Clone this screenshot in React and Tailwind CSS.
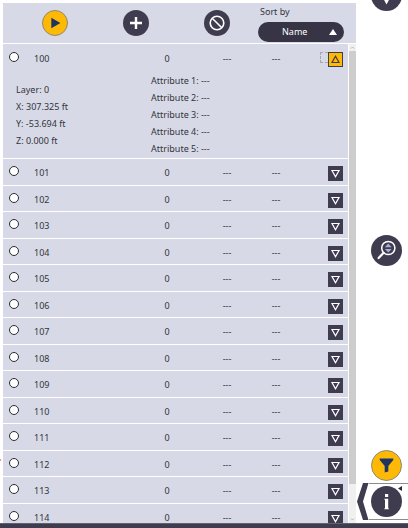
import { useState } from "react";

const points = Array.from({ length: 15 }, (_, i) => ({
  id: 100 + i,
  count: 0,
  layer: 0,
  x: "307.325 ft",
  y: "-53.694 ft",
  z: "0.000 ft",
}));

const attributes = [1, 2, 3, 4, 5];

const PlayIcon = () => (
  <svg viewBox="1 1 24 24" className="h-full w-full">
    <path d="M9.3 7.8 18.4 13 9.3 18.2Z" fill="#1f3560" />
  </svg>
);

const PlusIcon = () => (
  <svg viewBox="0 0 26 26" className="h-full w-full">
    <path d="M13 7v12M7 13h12" stroke="#fff" strokeWidth="2.4" />
  </svg>
);

const BanIcon = () => (
  <svg viewBox="0 0 26 26" className="h-full w-full" fill="none" stroke="#fff" strokeWidth="1.6">
    <circle cx="13" cy="13" r="6.8" />
    <path d="m8.2 8.2 9.6 9.6" />
  </svg>
);

const PinIcon = () => (
  <svg viewBox="0 0 31 31" className="h-full w-full">
    <path d="M12 18h7l-3.5 6.5Z" fill="#fff" />
  </svg>
);

const ZoomIcon = () => (
  <svg viewBox="0 0 31 31" className="h-full w-full">
    <circle cx="17.3" cy="13" r="6.6" fill="none" stroke="#fff" strokeWidth="1.5" />
    <path d="m12.6 17.8-5 5.2" stroke="#fff" strokeWidth="2.2" strokeLinecap="round" />
    <path d="m17.3 8.6 3.4 3.6h-6.8ZM17.3 17.6l3.4-3.6h-6.8Z" fill="#a9acd6" />
  </svg>
);

const FilterIcon = () => (
  <svg viewBox="1 1 29 29" className="h-full w-full">
    <path d="M8.7 8.5h13.6v1.6L17.3 16v5.5l-3.6 1V16L8.7 10.1Z" fill="#1f3560" />
  </svg>
);

const InfoIcon = () => (
  <svg viewBox="0 0 31 31" className="h-full w-full" fill="#fff">
    <path d="M14 8h3.2v3H14ZM13.4 12.8h3.8v9.4h.6v1h-4.4v-1h.6v-8.4h-.6Z" />
  </svg>
);

const roundTool = "block h-[26px] w-[26px] rounded-full";
const railTool = "block h-[31px] w-[31px] shrink-0 rounded-full";

const PointRow = ({ point, open, selected, onToggle, onSelect }) => (
  <>
    <tr className={open ? "h-[27px]" : "h-[26px] odd:h-[27px]"}>
      <td className={`pb-[2px] pl-[6px] ${open ? "" : "border-b border-white"}`}>
        <input
          type="radio"
          name="point"
          aria-label={`Select point ${point.id}`}
          checked={selected}
          onChange={onSelect}
          className="block h-[10px] w-[10px] appearance-none rounded-full border border-[#2b2b33] bg-white checked:bg-[#3f3c4f]"
        />
      </td>
      <td className={`pt-[2px] ${open ? "" : "border-b border-white"}`}>{point.id}</td>
      <td className={`pt-[2px] text-center ${open ? "" : "border-b border-white"}`}>{point.count}</td>
      <td className={`pt-[2px] text-center ${open ? "" : "border-b border-white"}`}>---</td>
      <td className={`pt-[2px] text-center ${open ? "" : "border-b border-white"}`}>---</td>
      <td className={`pt-[3px] pr-[5px] ${open ? "" : "border-b border-white"}`}>
        <div className="flex justify-end">
          {open && <span className="h-[11px] w-2 border border-r-0 border-dashed border-[#a5a6b0]" />}
          <button
            type="button"
            aria-label={`Details of point ${point.id}`}
            aria-expanded={open}
            onClick={onToggle}
            className={`h-[15px] w-[15px] border border-[#3f3c4f] ${open ? "bg-[#fdb906] text-[#3f3c4f]" : "bg-[#3f3c4f] text-white"}`}
          >
            <svg viewBox="0 0 13 13" className="block h-full w-full" fill="none" stroke="currentColor" strokeWidth="1.2">
              <path d={open ? "M6.5 3.2 10 9.5H3Z" : "M3 3.5h7L6.5 9.8Z"} />
            </svg>
          </button>
        </div>
      </td>
    </tr>
    {open && (
      <tr>
        <td colSpan={6} className="border-b border-white pt-px pb-px">
          <div className="flex items-center leading-[17px]">
            <div className="w-[148px] pl-[13px]">
              <p>Layer: {point.layer}</p>
              <p>X: {point.x}</p>
              <p>Y: {point.y}</p>
              <p>Z: {point.z}</p>
            </div>
            <div>
              {attributes.map((n) => (
                <p key={n}>Attribute {n}: ---</p>
              ))}
            </div>
          </div>
        </td>
      </tr>
    )}
  </>
);

const App = () => {
  const [openId, setOpenId] = useState(100);
  const [selectedId, setSelectedId] = useState(null);
  const [sort, setSort] = useState("Name");

  return (
    <div className="relative flex h-screen flex-col overflow-hidden bg-white font-['Noto_Sans',sans-serif] text-[9px] text-[#33333d]">
      <span className="absolute top-[459px] left-0 h-[2px] w-px bg-[#ff8a8a]" />
      <div className="flex min-h-0 flex-1">
        <section className="flex min-w-0 flex-1 flex-col pt-[3px] pl-[3px]">
          <header className="flex h-10 shrink-0 items-center bg-[#d7dae6] pr-3 pl-[39px]">
            <div className="flex gap-[55px]">
              <button type="button" aria-label="Play" className={`${roundTool} border border-[#8f8a70] bg-[#fdb906]`}>
                <PlayIcon />
              </button>
              <button type="button" aria-label="Add point" className={`${roundTool} bg-[#3f3c4f]`}>
                <PlusIcon />
              </button>
              <button type="button" aria-label="Clear" className={`${roundTool} bg-[#3f3c4f]`}>
                <BanIcon />
              </button>
            </div>
            <div className="ml-auto w-[86px]">
              <label htmlFor="sort" className="block pb-[2px] pl-[2px] leading-4">
                Sort by
              </label>
              <div className="relative">
                <select
                  id="sort"
                  value={sort}
                  onChange={(e) => setSort(e.target.value)}
                  className="block h-5 w-full appearance-none rounded-full bg-[#373446] pl-6 text-white"
                >
                  <option>Name</option>
                  <option>Layer</option>
                </select>
                <svg viewBox="0 0 8 6" className="pointer-events-none absolute top-[7px] right-[7px] h-[6px] w-2">
                  <path d="M4 0 8 6H0Z" fill="#fff" />
                </svg>
              </div>
            </div>
          </header>

          <div className="mt-px flex min-h-0 flex-1">
            <div className="min-w-0 flex-1 overflow-hidden">
              <table className="w-full table-fixed border-separate border-spacing-0 bg-[#d7dae6]">
                <colgroup>
                  <col className="w-[31px]" />
                  <col />
                  <col className="w-[60px]" />
                  <col className="w-[60px]" />
                  <col className="w-[38px]" />
                  <col className="w-[53px]" />
                </colgroup>
                <tbody>
                  {points.map((point) => (
                    <PointRow
                      key={point.id}
                      point={point}
                      open={openId === point.id}
                      selected={selectedId === point.id}
                      onToggle={() => setOpenId(openId === point.id ? null : point.id)}
                      onSelect={() => setSelectedId(point.id)}
                    />
                  ))}
                </tbody>
              </table>
            </div>
            <div className="ml-px flex w-[7px] flex-col bg-[#f0f0f0]">
              <svg viewBox="0 0 7 7" className="h-[7px] w-[7px] shrink-0">
                <path d="m2 4.5 1.5-1.5L5 4.5" fill="none" stroke="#b5b5b5" />
              </svg>
              <div className="flex-1 bg-[#cdcdcd]" />
              <div className="h-8 shrink-0" />
              <svg viewBox="0 0 7 7" className="h-[7px] w-[7px] shrink-0">
                <path d="m2 2.5 1.5 1.5L5 2.5" fill="none" stroke="#b5b5b5" />
              </svg>
            </div>
          </div>
        </section>

        <aside className="flex w-[52px] shrink-0 flex-col items-end pb-[3px]">
          <div className="-mt-5 pr-[6px]">
            <button type="button" aria-label="Locate" className={`${railTool} bg-[#3f3c4f]`}>
              <PinIcon />
            </button>
          </div>
          <div className="flex flex-1 items-center pt-[10px] pr-[6px]">
            <button type="button" aria-label="Zoom" className={`${railTool} mt-[30px] bg-[#3f3c4f]`}>
              <ZoomIcon />
            </button>
          </div>
          <div className="flex w-full flex-col items-end">
            <button type="button" aria-label="Filter" className={`${railTool} mr-[6px] border border-[#8f8a70] bg-[#fdb906]`}>
              <FilterIcon />
            </button>
            <div className="mt-[2px] flex h-[37px] w-full pl-px">
              <svg viewBox="0 0 12 37" className="h-full w-3 shrink-0">
                <path d="M6 0h5.5L6 18.5l5.5 18.5H6L0 18.5Z" fill="#3f3c4f" />
              </svg>
              <div className="relative flex flex-1 items-center border-y border-[#8c8c94] pl-[2px]">
                <button type="button" aria-label="Information" className={`${railTool} bg-[#3f3c4f]`}>
                  <InfoIcon />
                </button>
                <svg viewBox="0 0 4 5" className="absolute top-[2px] right-[6px] h-[5px] w-1">
                  <path d="M4 0v5L0 2.5Z" fill="#2b2936" />
                </svg>
              </div>
            </div>
          </div>
        </aside>
      </div>
      <footer className="h-[5px] shrink-0 border-t border-[#62606e] bg-[#3f3c4f]" />
    </div>
  );
};

export default App;
